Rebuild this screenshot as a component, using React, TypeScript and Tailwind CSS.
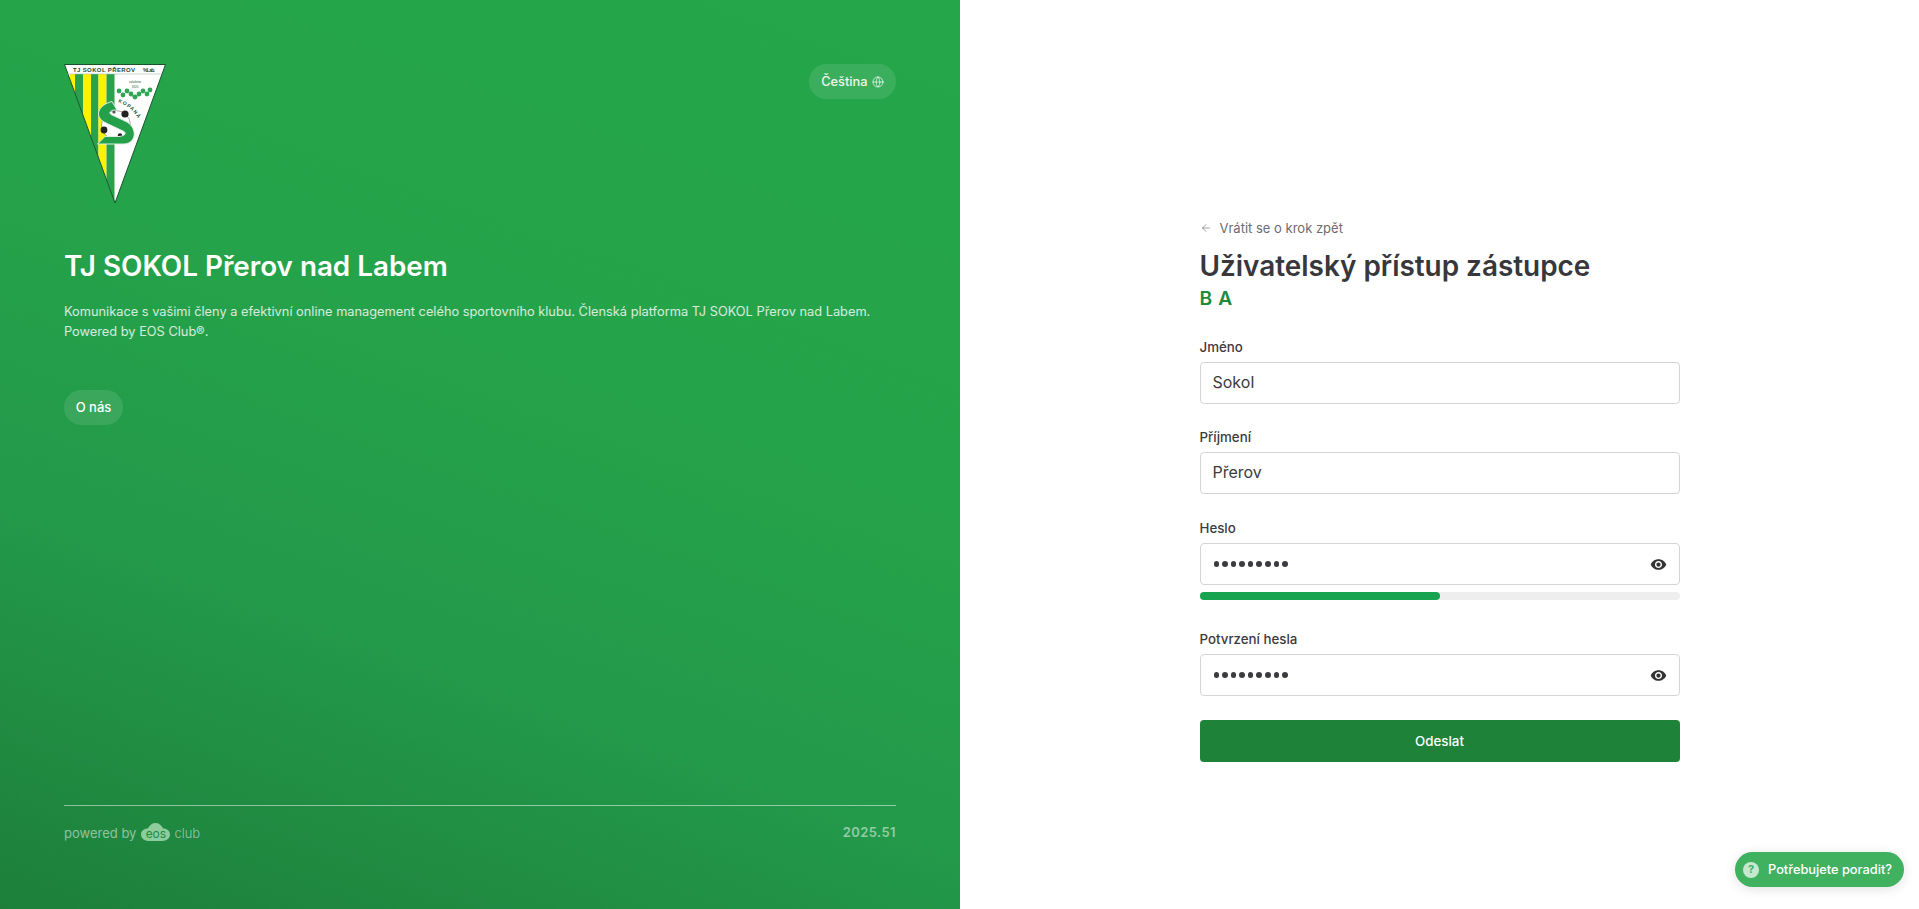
import React from 'react';
import { ArrowLeft, Globe } from 'lucide-react';

const font = "font-['Inter',sans-serif]";
const logoFont = 'Liberation Sans, sans-serif';

function Logo() {
    const clover = [[55, 27], [59, 31], [63, 27], [67, 30], [75, 30], [79, 27], [83, 30], [86, 26], [71, 33]];
    return (
        <svg width="102" height="140" viewBox="0 0 102 140" className="block">
            <defs>
                <clipPath id="pennant">
                    <polygon points="0.5,0.5 101.5,0.5 51,139" />
                </clipPath>
            </defs>
            <polygon points="0.5,0.5 101.5,0.5 51,139" fill="#ffffff" />
            <g clipPath="url(#pennant)">
                <rect x="6" y="10" width="5" height="130" fill="#fff200" />
                <rect x="11" y="10" width="8" height="130" fill="#2aa24c" />
                <rect x="19" y="10" width="8" height="130" fill="#fff200" />
                <rect x="27" y="10" width="7.5" height="130" fill="#2aa24c" />
                <rect x="34.5" y="10" width="8" height="130" fill="#fff200" />
                <rect x="42.5" y="10" width="8" height="130" fill="#2aa24c" />
            </g>
            <polygon points="0.5,0.5 101.5,0.5 51,139" fill="none" stroke="#17532d" strokeWidth="1" />
            <line x1="3" y1="10" x2="98" y2="10" stroke="#9fbfa8" strokeWidth="0.6" />
            <text x="9" y="8.4" fontSize="6" fontWeight="700" textLength="62" fill="#1f4a30" fontFamily={logoFont}>TJ SOKOL PŘEROV</text>
            <text x="79" y="8.4" fontSize="5" fontWeight="700" textLength="12" fill="#1f4a30" fontFamily={logoFont}>%Lab.</text>
            <text x="71" y="19" textAnchor="middle" fontSize="3" fill="#245c38" fontFamily={logoFont}>založeno</text>
            <text x="71" y="24" textAnchor="middle" fontSize="3" fill="#245c38" fontFamily={logoFont}>1920</text>
            {clover.map(([x, y], i) => (
                <circle key={i} cx={x} cy={y} r="2.4" fill="#2fa653" />
            ))}
            <path d="M71 34 L67 31 M71 34 L75 31" stroke="#2fa653" strokeWidth="0.8" fill="none" />
            <circle cx="52" cy="61" r="14.5" fill="#ffffff" stroke="#555" strokeWidth="0.5" />
            <circle cx="40" cy="66" r="3.4" fill="#222" />
            <circle cx="61" cy="50" r="3.6" fill="#222" />
            <circle cx="50" cy="48" r="1.6" fill="#555" />
            <circle cx="56" cy="71.5" r="2.2" fill="#222" />
            <path d="M48 37.5 C34 41 29 53 42 59 L60 67.5 C63 70 60 72 55 72.5 L41 72.5 L33.5 80 L60 80 C74 79 73 62 61 57 L47 50.5 C44 48 48 45.5 53 46 Z" fill="#24a04a" stroke="#dfeee3" strokeWidth="1" />
            <path d="M54 38 Q70 44 77 60" id="kopana" fill="none" />
            <text fontSize="5" fontWeight="700" fill="#245c38" fontFamily={logoFont} letterSpacing="1">
                <textPath href="#kopana">KOPANÁ</textPath>
            </text>
        </svg>
    );
}

function EosLogo() {
    return (
        <div className="relative w-[29px] h-[18px] ml-[5px] mr-[4px] shrink-0 -mt-[2px]">
            <svg width="29" height="18" viewBox="0 0 30 18" preserveAspectRatio="none" className="block">
                <path d="M8 18 C3 18 0 15 0 11.5 C0 8 3 5.5 7 5.5 C9 2 11.5 0 15 0 C18.5 0 21 2 23 5.5 C27 5.5 30 8 30 11.5 C30 15 27 18 22 18 Z" fill="#8ecb9d" />
            </svg>
            <span className="absolute inset-0 flex items-center justify-center pt-[3px] text-[12px] leading-none text-[#218c41]">eos</span>
        </div>
    );
}

function Eye() {
    return (
        <svg width="17" height="17" viewBox="0 0 24 24" fill="#333333">
            <path d="M12 4.5C7 4.5 2.73 7.61 1 12c1.73 4.39 6 7.5 11 7.5s9.27-3.11 11-7.5c-1.73-4.39-6-7.5-11-7.5zM12 17c-2.76 0-5-2.24-5-5s2.24-5 5-5 5 2.24 5 5-2.24 5-5 5zm0-8c-1.66 0-3 1.34-3 3s1.34 3 3 3 3-1.34 3-3-1.34-3-3-3z" />
        </svg>
    );
}

function Field({ label, value, secret, className }: { label: string; value: string; secret?: boolean; className?: string }) {
    return (
        <div className={className}>
            <div className="text-[13.3px] leading-[20px] font-medium text-[#3b3b40] mb-[5px]">{label}</div>
            <div className="h-[42px] rounded-[4px] border border-[#d5d5d8] bg-white flex items-center justify-between pl-3 pr-3">
                {secret ? (
                    <div className="flex gap-[3px] pl-[1px]">
                        {Array.from({ length: 9 }).map((_, i) => (
                            <span key={i} className="w-[5.6px] h-[5.6px] rounded-full bg-[#3b3b40]" />
                        ))}
                    </div>
                ) : (
                    <span className="text-base text-[#3b3b40] -mt-[2px]">{value}</span>
                )}
                {secret && <Eye />}
            </div>
        </div>
    );
}

export default function App() {
    return (
        <div className={`${font} flex h-[909px] w-full overflow-hidden bg-white`}>
            <div className="w-[960px] shrink-0 flex flex-col p-16 pb-[66px] text-white bg-[linear-gradient(20deg,#1d7f3a_0%,#23994a_32%,#25a34a_60%,#25a64b_100%)]">
                <div className="flex justify-between items-start">
                    <Logo />
                    <div className="h-[35px] px-[12.5px] rounded-full bg-white/10 flex items-center gap-1 text-[12.8px] font-medium text-white/90">
                        Čeština <Globe size={12} strokeWidth={1.5} />
                    </div>
                </div>
                <h1 className="mt-[45px] text-[27.8px] leading-[34px] font-semibold">TJ SOKOL Přerov nad Labem</h1>
                <p className="mt-[19px] text-[12.8px] leading-[20px] text-white/80">
                    Komunikace s vašimi členy a efektivní online management celého sportovního klubu. Členská platforma TJ SOKOL Přerov nad Labem.
                    <br />
                    Powered by EOS Club®.
                </p>
                <div className="mt-[48px] self-start h-[35px] w-[59px] justify-center rounded-full bg-white/10 flex items-center text-[13px] font-medium">O nás</div>
                <div className="mt-auto border-t border-white/50 pt-[18px] flex items-center justify-between text-white/50">
                    <div className="flex items-center text-[13px]">
                        powered by <EosLogo /> <span className="font-light">club</span>
                    </div>
                    <span className="text-[13px] font-semibold tracking-[0.4px] -mt-[2px]">2025.51</span>
                </div>
            </div>

            <div className="relative flex-1 flex justify-center pt-[218px]">
                <div className="w-[480px]">
                    <div className="flex items-center gap-[8px] text-[13px] leading-[20px] text-[#6b6b70]">
                        <ArrowLeft size={12} strokeWidth={1.25} />
                        Vrátit se o krok zpět
                    </div>
                    <h2 className="mt-[10px] text-[27.9px] leading-[36px] font-semibold text-[#37373c]">Uživatelský přístup zástupce</h2>
                    <div className="mt-[1px] text-[19.2px] leading-[26px] font-semibold text-[#1e8a3c] tracking-[0.6px]">B A</div>
                    <Field className="mt-[26px]" label="Jméno" value="Sokol" />
                    <Field className="mt-[23px]" label="Příjmení" value="Přerov" />
                    <Field className="mt-[24px]" label="Heslo" value="" secret />
                    <div className="mt-[7px] h-2 rounded-full bg-[#eeeeee]">
                        <div className="h-2 w-1/2 rounded-full bg-[#17a34f]" />
                    </div>
                    <Field className="mt-[29px]" label="Potvrzení hesla" value="" secret />
                    <div className="mt-6 h-[42px] pt-[1px] rounded-[4px] bg-[#1e8239] flex items-center justify-center text-[13.3px] font-medium text-white">Odeslat</div>
                </div>

                <div className="absolute right-[15px] bottom-[22px] h-[35px] pl-2 pr-3 rounded-full bg-[#3fb15f] flex items-center gap-[9px] text-[12.8px] font-medium text-white shadow-[0_2px_12px_rgba(0,0,0,0.12)]">
                    <span className="w-4 h-4 rounded-full bg-white/70 flex items-center justify-center text-[11px] font-bold text-[#3fb15f]">?</span>
                    Potřebujete poradit?
                </div>
            </div>
        </div>
    );
}
